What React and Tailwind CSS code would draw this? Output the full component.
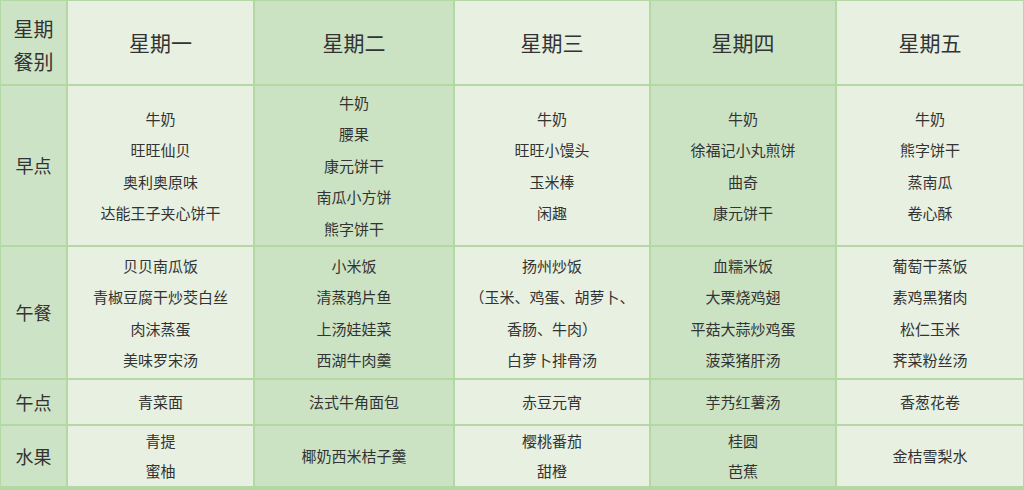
import React from "react";

const font = { fontFamily: '"Noto Sans CJK SC", "Noto Sans", sans-serif' };

const days = ["星期一", "星期二", "星期三", "星期四", "星期五"];

const rows = [
  {
    label: "早点",
    lh: "leading-[31.5px]",
    cells: [
      ["牛奶", "旺旺仙贝", "奥利奥原味", "达能王子夹心饼干"],
      ["牛奶", "腰果", "康元饼干", "南瓜小方饼", "熊字饼干"],
      ["牛奶", "旺旺小馒头", "玉米棒", "闲趣"],
      ["牛奶", "徐福记小丸煎饼", "曲奇", "康元饼干"],
      ["牛奶", "熊字饼干", "蒸南瓜", "卷心酥"],
    ],
  },
  {
    label: "午餐",
    lh: "leading-[31.5px]",
    cells: [
      ["贝贝南瓜饭", "青椒豆腐干炒茭白丝", "肉沫蒸蛋", "美味罗宋汤"],
      ["小米饭", "清蒸鸦片鱼", "上汤娃娃菜", "西湖牛肉羹"],
      ["扬州炒饭", "（玉米、鸡蛋、胡萝卜、", "香肠、牛肉）", "白萝卜排骨汤"],
      ["血糯米饭", "大栗烧鸡翅", "平菇大蒜炒鸡蛋", "菠菜猪肝汤"],
      ["葡萄干蒸饭", "素鸡黑猪肉", "松仁玉米", "荠菜粉丝汤"],
    ],
  },
  {
    label: "午点",
    lh: "leading-[31.5px]",
    cells: [["青菜面"], ["法式牛角面包"], ["赤豆元宵"], ["芋艿红薯汤"], ["香葱花卷"]],
  },
  {
    label: "水果",
    lh: "leading-[30px]",
    cells: [["青提", "蜜柚"], ["椰奶西米桔子羹"], ["樱桃番茄", "甜橙"], ["桂圆", "芭蕉"], ["金桔雪梨水"]],
  },
];

const LIGHT = "bg-[#e7f0e1]";
const DARK = "bg-[#cbe2c3]";

function cellBg(i) {
  return i === 1 || i === 3 ? DARK : LIGHT;
}

export default function App() {
  return (
    <div
      style={font}
      className="w-[1024px] h-[490px] overflow-hidden bg-[#b4d8a4] pt-[1px] px-[1px] pb-[4px] grid grid-cols-[65px_185px_198px_194px_184px_186px] grid-rows-[83px_159px_131px_44px_60px] gap-[2px] text-[#333333]"
    >
      <div className="bg-[#cde3c5] flex flex-col items-center justify-center text-[20px] leading-[33px] pt-[4px]">
        <span>星期</span>
        <span>餐别</span>
      </div>
      {days.map((d, i) => (
        <div key={d} className={`${cellBg(i)} flex items-center justify-center text-[21px]`}>
          {d}
        </div>
      ))}
      {rows.map((r) => (
        <React.Fragment key={r.label}>
          <div className="bg-[#cde3c5] flex items-center justify-center text-[18px]">{r.label}</div>
          {r.cells.map((items, i) => (
            <div
              key={i}
              className={`${cellBg(i)} flex flex-col items-center justify-center text-[15px] ${r.lh} whitespace-nowrap`}
            >
              {items.map((t, k) => (
                <span key={k}>{t}</span>
              ))}
            </div>
          ))}
        </React.Fragment>
      ))}
    </div>
  );
}
